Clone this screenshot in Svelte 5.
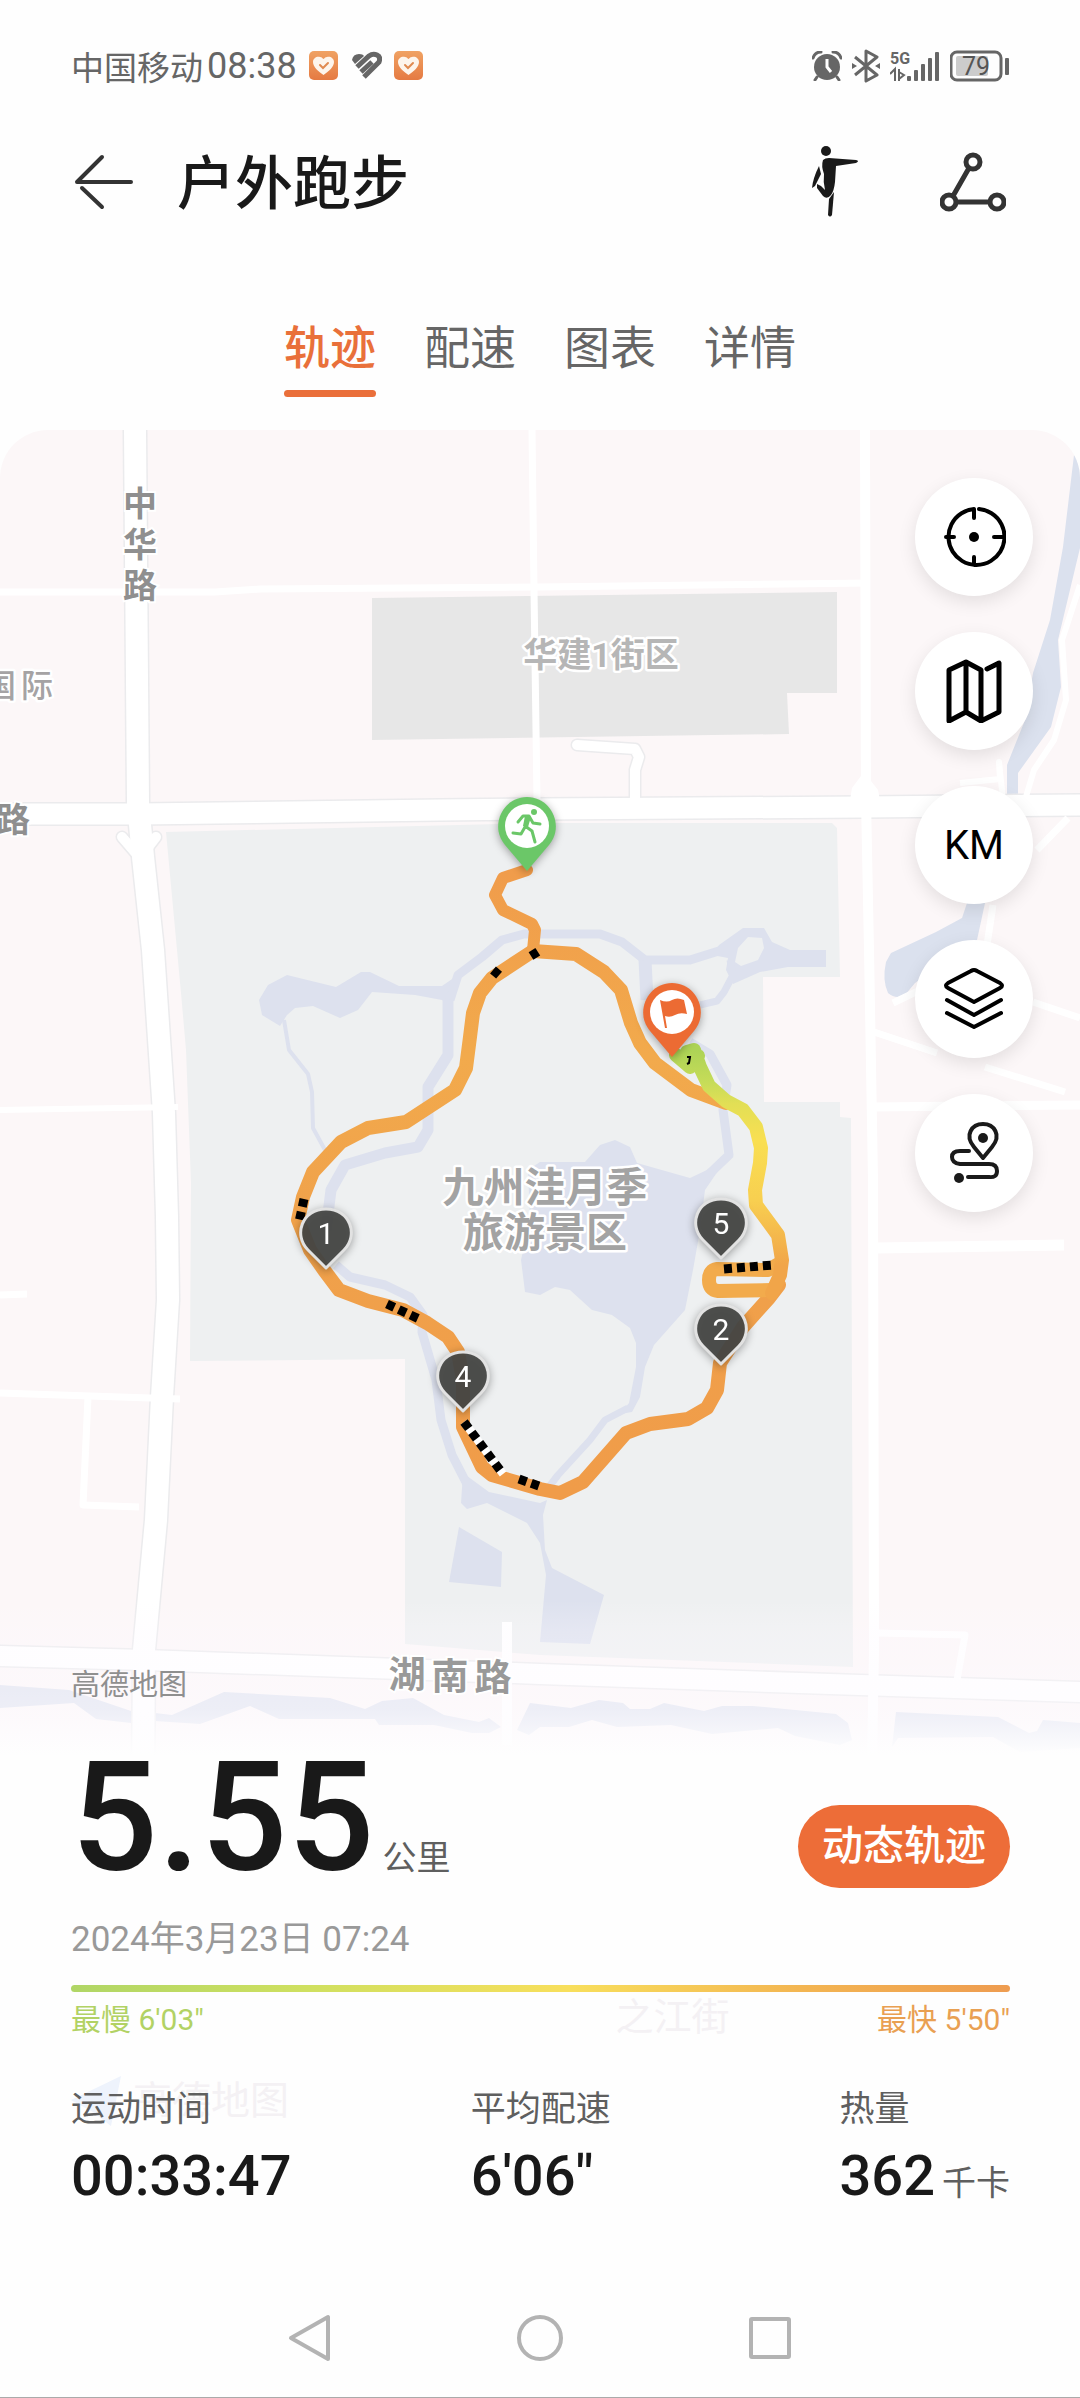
<script>
const tabs = ['轨迹', '配速', '图表', '详情']
let active = $state(0)

const tools = [
  { id: 'locate', label: '定位' },
  { id: 'map', label: '地图类型' },
  { id: 'km', label: '公里标记' },
  { id: 'layers', label: '图层' },
  { id: 'route', label: '路线' }
]

const stats = [
  { label: '运动时间', value: '00:33:47', unit: '' },
  { label: '平均配速', value: '6\'06"', unit: '' },
  { label: '热量', value: '362', unit: '千卡' }
]

// 公里标记点
const kmPins = [
  { n: 1, x: 326, y: 1235 },
  { n: 4, x: 463, y: 1378 },
  { n: 5, x: 721, y: 1225 },
  { n: 2, x: 721, y: 1331 }
]

// 道路名，逐字沿路摆放
const roadNames = [
  { t: '中', x: 140, y: 516 },
  { t: '华', x: 140, y: 557 },
  { t: '路', x: 140, y: 598 },
  { t: '路', x: 13, y: 832 },
  { t: '湖', x: 407, y: 1688, big: true },
  { t: '南', x: 450, y: 1690, big: true },
  { t: '路', x: 493, y: 1691, big: true }
]

// 白色道路 [宽度, 路径]
const roads = [
  [7, 'M0 592H215L260 589L540 587L870 583'],
  [7, 'M532 430L534 590L537 800'],
  [10, 'M865 430L866 800L869 950L873 1180L874 1650L872 1760'],
  [9, 'M873 1107L1080 1105'],
  [11, 'M877 1248L1064 1245'],
  [7, 'M868 1030L937 1053M985 1067L1065 1092M1033 1002L1080 1018M893 1003L920 990'],
  [6, 'M0 1110L178 1107'],
  [7, 'M0 1295L27 1294'],
  [7, 'M0 1393L180 1399'],
  [7, 'M88 1397L83 1505L139 1507'],
  [7, 'M877 1633L965 1635L957 1680'],
  [6, 'M1080 585L1062 640L1066 700L1054 740L1034 770L1025 800'],
  [6, 'M960 783L1000 779L999 762L1003 800'],
  [7, 'M1068 818L1037 850M993 905L987 945'],
  [10, 'M507 1622V1745']
]

const mainRoads = [
  [22, 'M135 430L138 803L143 857L153 950L164 1113L167 1217L168 1300L162 1397L156 1520L144 1650L143 1790'],
  [21, 'M0 814L140 814L440 810L540 809L864 807L1080 805'],
  [20, 'M0 1656L145 1660L540 1674L860 1685L1080 1692'],
  [10, 'M577 745L635 749L639 757L635 770V802'],
  [10, 'M122 837L140 858L156 837']
]

const arrows = [
  'M531 956L539 951',
  'M493 970L500 976',
  'M304 1199L299 1222',
  'M387 1304L419 1319',
  'M464 1422L503 1474',
  'M519 1479L539 1486',
  'M724 1269L773 1265'
]
</script>

<div class="page">
  <div class="status">
    <span class="carrier">中国移动</span>
    <span class="clock">08:38</span>
    <svg class="app-icon" width="30" height="30" viewBox="0 0 30 30" aria-hidden="true">
      <defs>
        <linearGradient id="heart" x1="0" y1="0" x2="0" y2="1">
          <stop offset="0" stop-color="#f0a263" />
          <stop offset="1" stop-color="#e57a42" />
        </linearGradient>
      </defs>
      <rect width="29" height="29" rx="5" fill="url(#heart)" />
      <path d="M14.5 24C9 20 4 16 4 11C4 7 8 5 11 6C13 6 14 8 14.5 8C15 8 16 6 18 6C21 5 25 7 25 11C25 16 20 20 14.5 24Z" fill="#fdf5ec" />
      <path d="M11 14L14 17L19 12" fill="none" stroke="#e08a50" stroke-width="2" stroke-linecap="round" />
    </svg>
    <svg class="app-icon" width="31" height="30" viewBox="0 0 31 30" aria-hidden="true">
      <g fill="none" stroke="#666" stroke-width="5">
        <path d="M1 9Q2 3 8 3Q12 3 13 5L4 13Z" fill="#666" stroke="none" />
        <path d="M6 16L18 5Q22 2 26 4T28 11L13 26" />
        <path d="M10 21L21 11" />
      </g>
    </svg>
    <svg class="app-icon" width="30" height="30" viewBox="0 0 30 30" aria-hidden="true">
      <rect width="29" height="29" rx="5" fill="url(#heart)" />
      <path d="M14.5 24C9 20 4 16 4 11C4 7 8 5 11 6C13 6 14 8 14.5 8C15 8 16 6 18 6C21 5 25 7 25 11C25 16 20 20 14.5 24Z" fill="#fdf5ec" />
      <path d="M11 14L14 17L19 12" fill="none" stroke="#e08a50" stroke-width="2" stroke-linecap="round" />
    </svg>

    <div class="status-right">
      <svg width="30" height="30" viewBox="0 0 30 30" aria-hidden="true">
        <circle cx="15" cy="16" r="13" fill="#666" />
        <path d="M1 7Q3 1 9 1M29 7Q27 1 21 1M5 26L3 29M25 26L27 29" fill="none" stroke="#666" stroke-width="3" stroke-linecap="round" />
        <path d="M15 8V16L19 21" fill="none" stroke="#fff" stroke-width="3" />
      </svg>
      <svg width="28" height="34" viewBox="0 0 28 34" aria-hidden="true">
        <path d="M3 8L25 26L14 32V2L25 8L3 26" fill="none" stroke="#666" stroke-width="3" stroke-linejoin="round" />
        <path d="M0 14L5 17L0 20ZM28 14L23 17L28 20Z" fill="#666" />
      </svg>
      <svg width="50" height="32" viewBox="0 0 50 32" aria-hidden="true">
        <text x="0" y="14" class="net">5G</text>
        <path d="M0 24L5 19V31M9 19V31M9 29L14 25L9 22" fill="none" stroke="#666" stroke-width="2" />
        <g fill="#666">
          <rect x="17" y="26" width="4" height="5" rx="1" />
          <rect x="24" y="20" width="4" height="11" rx="1" />
          <rect x="31" y="14" width="4" height="17" rx="1" />
          <rect x="38" y="8" width="4" height="23" rx="1" />
          <rect x="45" y="2" width="4" height="29" rx="1" />
        </g>
      </svg>
      <svg width="60" height="32" viewBox="0 0 60 32" aria-hidden="true">
        <rect x="1" y="2" width="50" height="28" rx="6" fill="none" stroke="#666" stroke-width="3" />
        <rect x="6" y="6" width="32" height="20" rx="2" fill="#ccc" />
        <rect x="55" y="8" width="4" height="17" rx="1" fill="#666" />
        <text x="26" y="25" class="level">79</text>
      </svg>
    </div>
  </div>

  <header class="header">
    <button class="icon-btn" aria-label="返回">
      <svg width="60" height="58" viewBox="0 0 60 58">
        <g fill="none" stroke="#333" stroke-width="4" stroke-linecap="round">
          <path d="M57 29H3L28 4" stroke-linejoin="round" />
          <path d="M8 35L28 54" />
        </g>
      </svg>
    </button>
    <h1>户外跑步</h1>
    <button class="icon-btn" aria-label="拉伸">
      <svg width="48" height="72" viewBox="0 0 48 72" fill="#1a1a1a">
        <circle cx="14" cy="5" r="5" />
        <path d="M11 14Q13 12 17 12L44 14Q48 15 44 17L24 20L23 36Q22 45 19 49Q15 54 11 50L5 42L5 38L9 40L13 44Q11 36 12 28Q9 20 11 14Z" />
        <path d="M7 20L9 28L3 40L0 42Q1 32 7 20Z" />
        <path d="M17 53L22 46L20 69Q18 72 16 69Z" />
      </svg>
    </button>
    <button class="icon-btn share" aria-label="分享">
      <svg width="66" height="60" viewBox="0 0 66 60" fill="none" stroke="#333" stroke-width="5">
        <circle cx="33" cy="10" r="7" />
        <circle cx="9" cy="50" r="7" />
        <circle cx="57" cy="50" r="7" />
        <path d="M29 16L13 44M16 50H50" />
      </svg>
    </button>
  </header>

  <nav class="tabs">
    {#each tabs as tab, i}
      <button class="tab" class:active={active === i} onclick={() => (active = i)}>{tab}</button>
    {/each}
  </nav>

  <section class="map">
    <svg class="canvas" viewBox="0 430 1080 1326" role="img" aria-label="运动轨迹">
      <defs>
        <linearGradient id="fade" x1="0" y1="0" x2="0" y2="1">
          <stop offset="0" stop-color="#fdfbff" stop-opacity="0" />
          <stop offset="0.2" stop-color="#fdf9ff" stop-opacity="0.25" />
          <stop offset="0.7" stop-color="#fdfbff" stop-opacity="0.5" />
          <stop offset="1" stop-color="#fefefe" />
        </linearGradient>
        <linearGradient id="pace" gradientUnits="userSpaceOnUse" x1="0" y1="1050" x2="0" y2="1265">
          <stop offset="0" stop-color="#add356" />
          <stop offset="0.15" stop-color="#c6dc58" />
          <stop offset="0.25" stop-color="#e2df55" />
          <stop offset="0.42" stop-color="#f9df52" />
          <stop offset="0.7" stop-color="#f8cf50" />
          <stop offset="1" stop-color="#f1a549" />
        </linearGradient>
        <linearGradient id="track" gradientUnits="userSpaceOnUse" x1="0" y1="870" x2="0" y2="1490">
          <stop offset="0" stop-color="#f09c4b" />
          <stop offset="0.3" stop-color="#f2aa4c" />
          <stop offset="0.55" stop-color="#f0a24b" />
          <stop offset="1" stop-color="#f09c49" />
        </linearGradient>
      </defs>

      <rect y="430" width="1080" height="1326" fill="#fcf7f8" />

      <!-- 地块 -->
      <path d="M372 598L837 592V693H787L789 734L372 740Z" fill="#e7e7e7" />
      <path d="M166 832L540 823H832L837 828L840 977H763L764 1102H840V1117L851 1118L853 1667L540 1655L405 1644V1359L190 1361L191 1183L186 1050L181 993Z" fill="#eef0f1" />

      <!-- 水系 -->
      <g fill="#dde1ee">
        <path d="M1074 455L1080 463V548L1058 640L1061 687L1051 727L1018 773V800H1007V765L1025 720L1033 673L1050 620L1063 547Z" fill="#dbe1ee" />
        <path d="M967 903H985L977 940L915 983L905 995Q896 1000 888 993Q882 980 886 962L891 953L936 932L962 918Z" fill="#dbe1ee" />
        <path d="M287 975L336 987L361 972H370L399 986H442L458 975L450 1005L442 1000L415 995L372 992L358 1010L340 1018L313 1006L295 1008L287 1015L280 1026L262 1015L259 1000L268 985Z" />
        <path d="M719 945L743 928H764L772 942L790 950H826V967H788L760 972L733 984L726 970L728 958L712 955ZM735 962L741 966L758 960L764 948L762 938L748 937L738 948Z" fill-rule="evenodd" />
        <path d="M528 1170L540 1162H585L600 1145L615 1140L630 1147L637 1163L690 1178L707 1170L728 1155L722 1165L705 1190L700 1230L693 1270L685 1310L654 1345L645 1367L640 1397L632 1412L620 1414L629 1403L636 1367L636 1343L630 1328L612 1315L592 1310L570 1290L555 1287L540 1295L525 1292L521 1260L530 1220Z" />
        <path d="M463 1473L489 1492L540 1503L547 1500L543 1515L545 1550L552 1568L604 1595L590 1644L540 1642L546 1575L540 1543L527 1523L487 1503L467 1509L461 1503Z" />
        <path d="M459 1527L502 1552L501 1587L449 1582Z" />
        <path d="M0 1685L69 1690L131 1711L131 1723L96 1719L74 1703L0 1708ZM155 1713L172 1715L224 1692L330 1698L365 1709L382 1701L413 1698L444 1715L479 1722L489 1718L501 1727L489 1733H472L434 1725H379L375 1719H279L250 1706L200 1724L155 1721Z" />
        <path d="M530 1703L571 1708L599 1700L623 1703L630 1709H650L664 1703L704 1711L722 1706H753L836 1714L848 1723L852 1740L840 1745L795 1736L778 1728L712 1734L671 1725L617 1727L592 1720L569 1727H540L529 1735L517 1730Z" />
        <path d="M896 1712L998 1717L1029 1733L1037 1731L1043 1720L1080 1723V1748L1020 1752L993 1737L898 1738L892 1747Z" />
      </g>
      <g fill="none" stroke="#dde1ee" stroke-linejoin="round">
        <path d="M450 1000L458 975L482 957L502 940L524 934H600L622 942L645 960H690L722 950" stroke-width="9" />
        <path d="M645 960L647 1000" stroke-width="13" />
        <path d="M730 960L733 975L724 992L717 1001L700 1005" stroke-width="7" />
        <path d="M690 1042L710 1054L727 1085L723 1110L729 1155L705 1178" stroke-width="9" />
        <path d="M448 1000V1055L428 1087V1130L418 1147L385 1153L345 1165L331 1190L326 1230" stroke-width="11" />
        <path d="M336 1265L350 1277L385 1285L410 1297L423 1315L422 1332L436 1380L441 1420L452 1455L470 1490" stroke-width="9" />
        <path d="M628 1408L605 1420L590 1440L558 1475L545 1492" stroke-width="7" />
        <path d="M284 1020L289 1050L308 1074L312 1092L313 1128L325 1150" stroke-width="4" />
      </g>

      <!-- 道路 -->
      <g fill="none" stroke="#ebebed" stroke-linejoin="round" stroke-linecap="round">
        {#each mainRoads as [w, d]}
          <path {d} stroke-width={w + 3} />
        {/each}
      </g>
      <g fill="none" stroke="#fff" stroke-linejoin="round">
        {#each roads as [w, d]}
          <path {d} stroke-width={w} />
        {/each}
        {#each mainRoads as [w, d]}
          <path {d} stroke-width={w} stroke-linecap="round" />
        {/each}
      </g>
      <path d="M864 772L878 790L880 800H850L852 788Z" fill="#fff" />

      <rect y="1600" width="1080" height="156" fill="url(#fade)" />

      <!-- 文字标注 -->
      {#each roadNames as { t, x, y, big }}
        <text {x} {y} class="road-name" class:big>{t}</text>
      {/each}
      <text x="601" y="667" class="place block">华建1街区</text>
      <text x="37" y="697" class="place poi">际</text>
      <text x="0" y="697" class="place poi">国</text>
      <text x="545" y="1202" class="place park">九州洼月季</text>
      <text x="545" y="1247" class="place park">旅游景区</text>

      <!-- 轨迹 -->
      <g fill="none" stroke="url(#track)" stroke-width="14" stroke-linejoin="round" stroke-linecap="round">
        <path d="M527 870L503 878L495 895L503 910L532 924L535 930L533 950" stroke-width="12" />
        <path d="M533 951L492 978L480 993L473 1013L470 1037L466 1068L455 1090L406 1122L368 1128L341 1142L313 1172L303 1197L298 1220L310 1250L324 1270L339 1290L368 1301L403 1310L427 1323L448 1337L458 1352L463 1380V1427L482 1467L492 1475L540 1489L560 1493L583 1482L626 1433L650 1424L688 1419L707 1408L717 1390L720 1363L743 1327L769 1298L779 1285" />
        <path d="M533 951L576 954L604 972L621 990L631 1023L640 1043L655 1063L691 1090L726 1103" />
      </g>
      <path d="M782 1262L768 1270L717 1269Q709 1270 709 1280T718 1291L772 1290" fill="none" stroke="#f2ab4c" stroke-width="14" stroke-linejoin="round" />
      <path d="M676 1055L690 1067L698 1056L687 1052L694 1050L700 1067L709 1086L726 1101L743 1110L756 1127L761 1148L760 1163L755 1190L756 1205L778 1235L782 1260L780 1275L772 1293" fill="none" stroke="url(#pace)" stroke-width="14" stroke-linejoin="round" stroke-linecap="round" />
      <path d="M464 1422L503 1474" stroke="#fff" stroke-width="8" />
      <g stroke="#000" stroke-width="9" stroke-dasharray="8 5" fill="none">
        {#each arrows as d}
          <path {d} />
        {/each}
      </g>
      <path d="M687 1057L690 1057L689 1063L687 1064" fill="none" stroke="#000" stroke-width="2" />

      {#each kmPins as pin}
        <g class="pin" transform="translate({pin.x} {pin.y})">
          <path d="M0 33L-18 15C-33 0 -24 -26 0 -26S33 0 18 15Z" fill="#454644" fill-opacity="0.94" stroke="#e2e2e2" stroke-width="3" stroke-linejoin="round" />
          <text y="9">{pin.n}</text>
        </g>
      {/each}

      <g class="pin" transform="translate(527 826)">
        <path d="M0 45L-22 19C-38 0 -24 -29 0 -29S38 0 22 19Z" fill="#6bc768" />
        <circle r="22" fill="#fff" />
        <circle cx="7" cy="-14" r="3" fill="#6bc768" />
        <path d="M-9 -4L-4 -10L2 -10L6 -3L13 -2M2 -9L-2 0L5 5L8 16M-2 1L-6 8L-14 7" fill="none" stroke="#6bc768" stroke-width="3" stroke-linejoin="round" stroke-linecap="round" />
        <path d="M-2 -10L4 -9L1 1L-4 0Z" fill="#6bc768" />
      </g>
      <g class="pin" transform="translate(672 1012)">
        <path d="M0 45L-22 19C-38 0 -24 -29 0 -29S38 0 22 19Z" fill="#ec6b33" />
        <circle r="22" fill="#fff" />
        <path d="M-12 -12Q-5 -9 0 -12T12 -12L15 2Q8 0 3 3T-7 4L-5 16L-7 16Z" fill="#ec6b33" />
      </g>
    </svg>

    <div class="tools">
      {#each tools as tool}
        <button class="tool" aria-label={tool.label}>
          {#if tool.id === 'km'}
            KM
          {:else}
            <svg width="64" height="64" viewBox="0 0 64 64" fill="none" stroke="#000" stroke-width="4" stroke-linecap="round" stroke-linejoin="round">
              {#if tool.id === 'locate'}
                <path d="M37 4A28 28 0 1 1 32 4V13M4 32H12M52 32H60M32 60V52" />
                <circle cx="32" cy="32" r="5" fill="#000" stroke="none" />
              {:else if tool.id === 'map'}
                <path d="M45 10L57 4V53L39 62L24 53L7 62V11L24 3L39 11V61M24 4V52" stroke-width="5" />
              {:else if tool.id === 'layers'}
                <path d="M29 4Q32 2 35 4L58 16Q62 19 58 21L32 35L6 21Q2 19 6 16ZM5 33L32 48L59 33M5 46L32 60L59 46" />
              {:else}
                <g stroke="#1a1a1a">
                  <path d="M41 37L32 26C22 14 30 3 41 3S60 14 50 26Z" />
                  <path d="M27 30H18Q10 30 10 36T18 43H47Q55 43 55 50T47 56H26" />
                  <circle cx="41" cy="17" r="5" fill="#1a1a1a" stroke="none" />
                  <circle cx="17" cy="57" r="5" fill="#1a1a1a" stroke="none" />
                </g>
              {/if}
            </svg>
          {/if}
        </button>
      {/each}
    </div>
    <span class="provider">高德地图</span>
  </section>

  <section class="summary">
    <span class="ghost street" aria-hidden="true">之江街</span>
    <span class="ghost logo" aria-hidden="true">
      <svg width="54" height="50" viewBox="0 0 54 50">
        <path d="M0 24L50 0L40 50L22 36Z" fill="#eef3fc" />
      </svg>
      高德地图
    </span>

    <div class="total">
      <p class="distance"><strong>5.55</strong><span>公里</span></p>
      <button class="replay">动态轨迹</button>
    </div>
    <time class="date" datetime="2024-03-23T07:24">2024年3月23日 07:24</time>
    <div class="pace-bar"></div>
    <div class="pace-labels">
      <span class="slow">最慢 6'03"</span>
      <span class="fast">最快 5'50"</span>
    </div>

    <dl class="stats">
      {#each stats as stat}
        <div>
          <dt>{stat.label}</dt>
          <dd>{stat.value}{#if stat.unit}<small>{stat.unit}</small>{/if}</dd>
        </div>
      {/each}
    </dl>
  </section>

  <div class="sysnav">
    <button class="icon-btn" aria-label="后退">
      <svg width="48" height="50" viewBox="0 0 48 50"><path d="M42 4V46L5 25Z" /></svg>
    </button>
    <button class="icon-btn" aria-label="主屏幕">
      <svg width="48" height="50" viewBox="0 0 48 50"><circle cx="24" cy="25" r="21" /></svg>
    </button>
    <button class="icon-btn" aria-label="最近任务">
      <svg width="48" height="50" viewBox="0 0 48 50"><rect x="5" y="6" width="38" height="38" rx="1" /></svg>
    </button>
  </div>
</div>

<style>
:global(body) {
  margin: 0;
  background: #fff;
}

.page {
  font-family: Roboto, "Noto Sans CJK SC", sans-serif;
  color: #191919;
  background: #fefefe;
  border-bottom: 2px solid #aaa;
  box-sizing: border-box;
}

button {
  border: 0;
  padding: 0;
  background: none;
  font-family: inherit;
  color: inherit;
  cursor: pointer;
}

.icon-btn {
  display: flex;
}

.status {
  display: flex;
  align-items: center;
  height: 132px;
  padding: 0 70px 0 71px;
  color: #666;
}

.carrier {
  font-size: 33px;
}

.clock {
  margin: 0 12px 0 4px;
  font-size: 36px;
}

.app-icon + .app-icon {
  margin-left: 12px;
}

.status-right {
  display: flex;
  align-items: center;
  gap: 10px;
  margin-left: auto;
}

.net {
  font-size: 16px;
  font-weight: 700;
  fill: #666;
}

.level {
  font-size: 25px;
  fill: #555;
  text-anchor: middle;
}

.header {
  display: flex;
  align-items: center;
  height: 100px;
  padding: 0 74px 0 74px;
}

h1 {
  flex: 1;
  margin: 4px 0 0 43px;
  font-size: 58px;
  font-weight: 500;
  line-height: 80px;
}

.share {
  margin-left: 80px;
}

.tabs {
  display: flex;
  justify-content: center;
  gap: 48px;
  padding: 84px 0 33px;
}

.tab {
  padding-bottom: 10px;
  border-bottom: 7px solid transparent;
  font-size: 46px;
  line-height: 64px;
  color: #666;
}

.tab.active {
  position: relative;
  font-weight: 500;
  color: #e9703a;
}

.tab.active::after {
  content: '';
  position: absolute;
  left: 0;
  bottom: -7px;
  width: 100%;
  height: 7px;
  border-radius: 4px;
  background: #ea6f3a;
}

.map {
  position: relative;
  overflow: hidden;
  border-radius: 48px 48px 0 0;
}

.canvas {
  display: block;
  width: 100%;
}

.road-name {
  font-size: 34px;
  font-weight: 700;
  text-anchor: middle;
  fill: #8f8f8f;
  stroke: #fff;
  stroke-width: 4px;
  paint-order: stroke;
}

.road-name.big {
  font-size: 37px;
  fill: #999;
}

.place {
  text-anchor: middle;
  font-weight: 700;
  stroke: #fff;
  stroke-width: 5px;
  stroke-linejoin: round;
  paint-order: stroke;
}

.block {
  font-size: 34px;
  fill: #b6b6b6;
}

.poi {
  font-size: 32px;
  font-weight: 500;
  fill: #a5a3a4;
}

.park {
  font-size: 41px;
  fill: #a3a3a3;
}

.pin {
  filter: drop-shadow(0 2px 4px rgba(0, 0, 0, 0.35));
}

.pin text {
  font-size: 30px;
  text-anchor: middle;
  fill: #fff;
}

.tools {
  position: absolute;
  top: 48px;
  right: 47px;
  display: flex;
  flex-direction: column;
  gap: 36px;
}

.tool {
  display: flex;
  align-items: center;
  justify-content: center;
  width: 118px;
  height: 118px;
  border-radius: 50%;
  background: #fff;
  box-shadow: 0 6px 18px rgba(0, 0, 0, 0.1);
  font-size: 40px;
  color: #000;
}

.provider {
  position: absolute;
  left: 71px;
  bottom: 50px;
  font-size: 29px;
  line-height: 42px;
  color: #8f8f8f;
}

.summary {
  position: relative;
  padding: 0 70px 0 71px;
}

.summary > :not(.ghost) {
  position: relative;
}

.ghost {
  position: absolute;
  color: #f4f1f4;
}

.street {
  top: 236px;
  left: 57%;
  font-size: 38px;
  line-height: 50px;
}

.logo {
  top: 320px;
  left: 71px;
  display: flex;
  align-items: center;
  gap: 8px;
  font-size: 39px;
  line-height: 50px;
}

.total {
  display: flex;
  justify-content: space-between;
  align-items: flex-end;
  height: 132px;
}

.distance {
  display: flex;
  align-items: baseline;
  gap: 8px;
  margin: 0 0 10px;
}

.distance strong {
  font-size: 153px;
  font-weight: 500;
  line-height: 120px;
}

.distance span {
  font-size: 34px;
  line-height: 40px;
  color: #5f5f5f;
}

.replay {
  padding: 0 24px;
  border-radius: 42px;
  background: #ed6d38;
  font-size: 41px;
  font-weight: 500;
  line-height: 83px;
  color: #fff;
}

.date {
  display: block;
  margin-top: 32px;
  font-size: 35px;
  line-height: 40px;
  color: #999;
}

.pace-bar {
  height: 7px;
  margin-top: 25px;
  border-radius: 4px;
  background: linear-gradient(90deg, #b0d666, #cfe060 25%, #f8df5c 53%, #f3b552 78%, #ee9c50);
}

.pace-labels {
  display: flex;
  justify-content: space-between;
  margin-top: 10px;
  font-size: 30px;
  line-height: 36px;
}

.slow {
  color: #b2d264;
}

.fast {
  color: #e9a052;
}

.stats {
  display: grid;
  grid-template-columns: 13fr 12fr auto;
  margin: 50px 0 0;
}

dt {
  font-size: 35px;
  line-height: 44px;
  color: #5f5f5f;
}

dd {
  margin: 16px 0 0;
  font-size: 56px;
  font-weight: 500;
  line-height: 56px;
}

small {
  margin-left: 7px;
  font-size: 34px;
  font-weight: 400;
  line-height: 34px;
  color: #5f5f5f;
}

.sysnav {
  display: flex;
  justify-content: center;
  align-items: center;
  gap: 182px;
  height: 118px;
  margin-top: 75px;
}

.sysnav svg {
  fill: none;
  stroke: #b3b3b3;
  stroke-width: 4px;
  stroke-linejoin: round;
}
</style>
